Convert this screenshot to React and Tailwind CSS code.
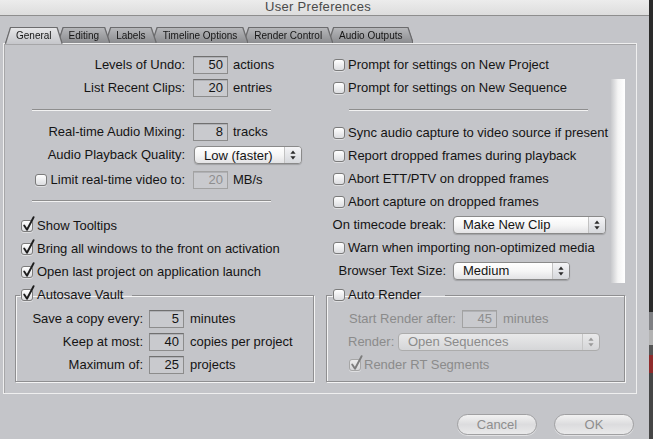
import React from "react";

function Check({ checked = false, disabled = false }) {
  return (
    <span
      className={`relative inline-block shrink-0 w-[12px] h-[12px] rounded-[3px] border ${
        disabled
          ? "border-[#a6a6a6] bg-gradient-to-b from-[#ececec] to-[#d6d7d9]"
          : "border-[#7b7b7b] bg-gradient-to-b from-white to-[#dcdde0]"
      } shadow-[0_1px_0_rgba(255,255,255,0.45)]`}
    >
      {checked && (
        <svg className="absolute left-[0px] top-[-5px] w-[14px] h-[16px] overflow-visible" viewBox="0 0 14 16">
          <path
            d="M2.2 9.5 L5 13.8 L11.6 1.2"
            fill="none"
            stroke={disabled ? "#7c7c7c" : "#1d1d1d"}
            strokeWidth="1.9"
            strokeLinecap="round"
            strokeLinejoin="round"
          />
        </svg>
      )}
    </span>
  );
}

function Field({ value, disabled = false }) {
  return (
    <span
      className={`w-[35px] h-[18px] shrink-0 flex items-center justify-end pr-[4px] border bg-[#c9cace] shadow-[inset_0_1px_0_rgba(0,0,0,0.12)] ${
        disabled ? "border-[#a2a2a2] text-[#8e8e8e]" : "border-[#8c8c8c] border-t-[#707070] text-[#141414]"
      }`}
    >
      {value}
    </span>
  );
}

function Arrows({ color }) {
  return (
    <svg width="6" height="10" viewBox="0 0 6 10">
      <path d="M3 0.5 L5.6 3.8 L0.4 3.8 Z" fill={color} />
      <path d="M3 9.5 L5.6 6.2 L0.4 6.2 Z" fill={color} />
    </svg>
  );
}

function Popup({ w, value, disabled = false }) {
  return (
    <span
      className={`${w} h-[18px] shrink-0 flex items-center rounded-[4px] border ${
        disabled
          ? "border-[#acacac] bg-gradient-to-b from-[#e9e9ea] to-[#d5d6d8] text-[#8b8b8b]"
          : "border-[#8a8a8a] bg-gradient-to-b from-white via-[#f6f6f6] to-[#e3e3e5] text-[#141414] shadow-[0_1px_1px_rgba(0,0,0,0.18)]"
      }`}
    >
      <span className="flex-1 pl-[9px] leading-none whitespace-nowrap">{value}</span>
      <span
        className={`w-[17px] h-full flex items-center justify-center border-l ${
          disabled ? "border-[#c6c6c6]" : "border-[#c2c2c2] bg-gradient-to-b from-[#f4f4f6] to-[#d6d8dc]"
        } rounded-r-[3px]`}
      >
        <Arrows color={disabled ? "#9a9a9a" : "#2a2a2a"} />
      </span>
    </span>
  );
}

function Tab({ label, selected = false, z }) {
  return (
    <div
      className={`relative ${z} -ml-[3px] first:ml-0 [filter:drop-shadow(0_-1px_0_#6c6c6e)_drop-shadow(1px_0_0_#6c6c6e)_drop-shadow(-1px_0_0_#6c6c6e)] ${
        selected ? "h-[16px] -mb-[1px]" : "h-[15px]"
      }`}
    >
      <div
        className={`h-full px-[10px] flex items-center text-[10px] text-[#161616] whitespace-nowrap [clip-path:polygon(5px_0,calc(100%_-_5px)_0,100%_100%,0_100%)] ${
          selected
            ? "bg-gradient-to-b from-[#e6e6e8] to-[#c5c6ca] pb-[1px]"
            : "bg-gradient-to-b from-[#b6b7ba] to-[#8c8d90]"
        }`}
      >
        {label}
      </div>
    </div>
  );
}

function Sep({ ml }) {
  return <div className={`${ml} w-[239px] h-[2px] border-t border-[#8e8e8e] border-b border-b-[#f2f2f2]`} />;
}

export default function App() {
  return (
    <div className="w-[653px] h-[439px] flex overflow-hidden bg-[#2a2a2a] font-['Liberation_Sans',Arial,sans-serif] text-[13px] text-[#141414]">
      <div className="w-[649px] h-full flex flex-col bg-[#c4c5c9]">
        {/* Title bar */}
        <div className="h-[16px] shrink-0 border-b border-[#8e8e8e] bg-gradient-to-b from-[#ececec] to-[#dddddd] flex justify-center items-start pr-[13px] overflow-hidden">
          <span className="h-[14px] leading-[13px] text-[13px] tracking-[0.3px] text-[#4a4a4a]">User Preferences</span>
        </div>
        <div className="h-[12px] shrink-0" />
        {/* Tabs */}
        <div className="h-[15px] shrink-0 flex items-start pl-[6px] relative z-10">
          <Tab label="General" selected z="z-[9]" />
          <Tab label="Editing" z="z-[6]" />
          <Tab label="Labels" z="z-[5]" />
          <Tab label="Timeline Options" z="z-[4]" />
          <Tab label="Render Control" z="z-[3]" />
          <Tab label="Audio Outputs" z="z-[2]" />
        </div>
        {/* Panel */}
        <div className="ml-[3px] w-[634px] h-[351px] shrink-0 border border-[#efefef] shadow-[inset_1px_1px_0_#a6a6a8] flex flex-col">
          <div className="h-[243px] flex">
            {/* Left column */}
            <div className="w-[316px] pt-[9px] flex flex-col">
              <div className="h-[23px] flex items-center">
                <span className="w-[181px] text-right">Levels of Undo:</span>
                <span className="ml-[8px]"><Field value="50" /></span>
                <span className="ml-[5px]">actions</span>
              </div>
              <div className="h-[23px] flex items-center">
                <span className="w-[181px] text-right">List Recent Clips:</span>
                <span className="ml-[8px]"><Field value="20" /></span>
                <span className="ml-[5px]">entries</span>
              </div>
              <div className="h-[22px] flex items-center">
                <Sep ml="ml-[28px]" />
              </div>
              <div className="h-[21px] flex items-center">
                <span className="w-[181px] text-right">Real-time Audio Mixing:</span>
                <span className="ml-[8px]"><Field value="8" /></span>
                <span className="ml-[5px]">tracks</span>
              </div>
              <div className="h-[26px] flex items-center">
                <span className="w-[181px] text-right">Audio Playback Quality:</span>
                <span className="ml-[9px]"><Popup w="w-[108px]" value="Low (faster)" /></span>
              </div>
              <div className="h-[23px] flex items-center">
                <span className="w-[181px] flex items-center justify-end gap-[4px]">
                  <Check />
                  <span>Limit real-time video to:</span>
                </span>
                <span className="ml-[8px]"><Field value="20" disabled /></span>
                <span className="ml-[5px]">MB/s</span>
              </div>
              <div className="h-[23px] pt-[9px]">
                <Sep ml="ml-[28px]" />
              </div>
              <div className="h-[23px] flex items-center pl-[17px] gap-[4px]">
                <Check checked />
                <span>Show Tooltips</span>
              </div>
              <div className="h-[23px] flex items-center pl-[17px] gap-[4px]">
                <Check checked />
                <span>Bring all windows to the front on activation</span>
              </div>
              <div className="h-[23px] flex items-center pl-[17px] gap-[4px]">
                <Check checked />
                <span>Open last project on application launch</span>
              </div>
            </div>
            {/* Right column */}
            <div className="w-[291px] pt-[9px] flex flex-col">
              <div className="h-[23px] flex items-center pl-[13px] gap-[3px]">
                <Check />
                <span>Prompt for settings on New Project</span>
              </div>
              <div className="h-[23px] flex items-center pl-[13px] gap-[3px]">
                <Check />
                <span>Prompt for settings on New Sequence</span>
              </div>
              <div className="h-[22px] flex items-center">
                <Sep ml="ml-[29px]" />
              </div>
              <div className="h-[23px] flex items-center pl-[13px] gap-[3px]">
                <Check />
                <span className="whitespace-nowrap">Sync audio capture to video source if present</span>
              </div>
              <div className="h-[23px] flex items-center pl-[13px] gap-[3px]">
                <Check />
                <span>Report dropped frames during playback</span>
              </div>
              <div className="h-[23px] flex items-center pl-[13px] gap-[3px]">
                <Check />
                <span>Abort ETT/PTV on dropped frames</span>
              </div>
              <div className="h-[23px] flex items-center pl-[13px] gap-[3px]">
                <Check />
                <span>Abort capture on dropped frames</span>
              </div>
              <div className="h-[23px] flex items-center">
                <span className="w-[126px] text-right whitespace-nowrap">On timecode break:</span>
                <span className="ml-[7px]"><Popup w="w-[153px]" value="Make New Clip" /></span>
              </div>
              <div className="h-[23px] flex items-center pl-[13px] gap-[3px]">
                <Check />
                <span className="whitespace-nowrap">Warn when importing non-optimized media</span>
              </div>
              <div className="h-[23px] flex items-center">
                <span className="w-[126px] text-right whitespace-nowrap">Browser Text Size:</span>
                <span className="ml-[7px]"><Popup w="w-[117px]" value="Medium" /></span>
              </div>
            </div>
            {/* White strip */}
            <div className="w-[14px] mt-[35px] h-[204px] bg-gradient-to-r from-[#c8c9cc] via-[#f4f4f4] to-white" />
          </div>
          {/* Group boxes */}
          <div className="flex items-start">
            <fieldset className="ml-[11px] w-[299px] border border-[#8f8f91] shadow-[1px_1px_0_#f4f4f4,inset_1px_1px_0_#f4f4f4] pt-[4px] pb-[5px]">
              <legend className="ml-[4px] pl-[1px] pr-[9px] h-[16px] flex items-center gap-[4px]">
                <Check checked />
                <span>Autosave Vault</span>
              </legend>
              <div className="h-[23px] flex items-center">
                <span className="w-[127px] text-right">Save a copy every:</span>
                <span className="ml-[6px]"><Field value="5" /></span>
                <span className="ml-[6px]">minutes</span>
              </div>
              <div className="h-[23px] flex items-center">
                <span className="w-[127px] text-right">Keep at most:</span>
                <span className="ml-[6px]"><Field value="40" /></span>
                <span className="ml-[6px]">copies per project</span>
              </div>
              <div className="h-[23px] flex items-center">
                <span className="w-[127px] text-right">Maximum of:</span>
                <span className="ml-[6px]"><Field value="25" /></span>
                <span className="ml-[6px]">projects</span>
              </div>
            </fieldset>
            <fieldset className="ml-[12px] w-[299px] border border-[#8f8f91] shadow-[1px_1px_0_#f4f4f4,inset_1px_1px_0_#f4f4f4] pt-[4px] pb-[5px]">
              <legend className="ml-[5px] pl-[1px] pr-[24px] h-[16px] flex items-center gap-[3px]">
                <Check />
                <span>Auto Render</span>
              </legend>
              <div className="h-[23px] flex items-center text-[#8b8b8b]">
                <span className="pl-[22px] whitespace-nowrap">Start Render after:</span>
                <span className="ml-[6px]"><Field value="45" disabled /></span>
                <span className="ml-[6px]">minutes</span>
              </div>
              <div className="h-[23px] flex items-center text-[#8b8b8b]">
                <span className="w-[71px] pl-[21px]">Render:</span>
                <Popup w="w-[202px]" value="Open Sequences" disabled />
              </div>
              <div className="h-[23px] flex items-center pl-[22px] gap-[3px] text-[#8b8b8b]">
                <Check checked disabled />
                <span>Render RT Segments</span>
              </div>
            </fieldset>
          </div>
        </div>
        {/* Buttons */}
        <div className="mt-[20px] flex justify-end gap-[17px] pr-[15px]">
          <button className="w-[80px] h-[21px] rounded-full border border-[#a0a0a2] bg-gradient-to-b from-[#f2f2f2] via-[#dcdcde] to-[#e9e9ea] text-[#8e8e8e] text-[13px] leading-none shadow-[0_1px_0_rgba(255,255,255,0.5)]">
            Cancel
          </button>
          <button className="w-[80px] h-[21px] rounded-full border border-[#a0a0a2] bg-gradient-to-b from-[#f2f2f2] via-[#dcdcde] to-[#e9e9ea] text-[#8e8e8e] text-[13px] leading-none shadow-[0_1px_0_rgba(255,255,255,0.5)]">
            OK
          </button>
        </div>
      </div>
      {/* Background window edge */}
      <div className="w-[4px] h-full flex flex-col">
        <div className="h-[312px] bg-[#2a2a2a]" />
        <div className="h-[18px] bg-[#7f8083]" />
        <div className="h-[15px] bg-[#b3b3b3]" />
        <div className="h-[10px] bg-[#555555]" />
        <div className="h-[18px] bg-[#8e2b2b]" />
        <div className="flex-1 bg-[#464646]" />
      </div>
    </div>
  );
}
